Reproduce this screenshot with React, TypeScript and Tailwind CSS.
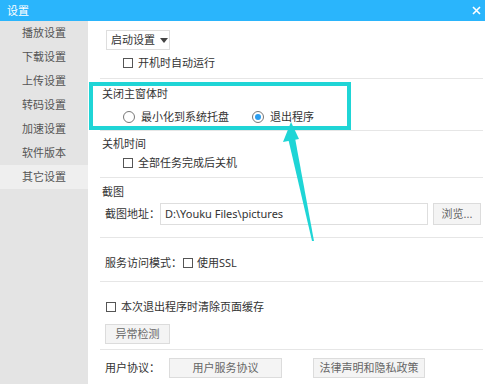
import React from "react";

const font = "font-['Noto_Sans','Noto_Sans_CJK_SC',sans-serif]";

const menu = ["播放设置", "下载设置", "上传设置", "转码设置", "加速设置", "软件版本", "其它设置"];

const Checkbox: React.FC = () => (
  <span className="inline-block w-[10px] h-[10px] border border-[#555] bg-white shrink-0" />
);

const Radio: React.FC<{ checked?: boolean }> = ({ checked }) => (
  <span className="inline-flex items-center justify-center w-[12px] h-[12px] rounded-full border border-[#777] bg-white shrink-0">
    {checked && <span className="w-[6px] h-[6px] rounded-full bg-[#2b9ef0]" />}
  </span>
);

const Divider: React.FC = () => <div className="h-px bg-[#e6e6e6]" />;

const GrayButton: React.FC<{ className: string; children: React.ReactNode }> = ({ className, children }) => (
  <button
    className={`flex items-center justify-center whitespace-nowrap shrink-0 border border-[#dcdcdc] bg-[#f4f4f4] text-[#666] text-[11px] ${className}`}
  >
    {children}
  </button>
);

export default function App() {
  return (
    <div
      className={`relative w-[485px] h-[384px] overflow-hidden whitespace-nowrap bg-white text-[11px] leading-[16px] text-[#333] ${font}`}
    >
      {/* title bar */}
      <div className="h-[21px] bg-[#2ab5fc] flex items-center justify-between pl-[7px] pr-[4px] text-white">
        <span>设置</span>
        <svg width="9" height="9" viewBox="0 0 9 9">
          <path d="M1 1 L8 8 M8 1 L1 8" stroke="white" strokeWidth="1.6" />
        </svg>
      </div>

      <div className="flex h-[363px]">
        {/* sidebar */}
        <div className="w-[88px] shrink-0 bg-[#e4e4e4] text-[#555]">
          {menu.map((m, i) => (
            <div
              key={m}
              className={`h-[24px] flex items-center justify-center ${i === menu.length - 1 ? "bg-[#efefef]" : ""}`}
            >
              {m}
            </div>
          ))}
        </div>

        {/* content */}
        <div className="flex-1 pl-[12px] pr-[2px]">
          {/* startup */}
          <div className="pt-[9px]">
            <div className="ml-[6px] w-[64px] h-[20px] border border-[#dedede] flex items-center pl-[4px] gap-[5px]">
              <span>启动设置</span>
              <span className="w-0 h-0 border-l-[4px] border-r-[4px] border-t-[5px] border-l-transparent border-r-transparent border-t-[#444]" />
            </div>
            <div className="mt-[5px] ml-[23px] h-[16px] flex items-center gap-[5px]">
              <Checkbox />
              <span>开机时自动运行</span>
            </div>
          </div>
          <div className="mt-[7px]">
            <Divider />
          </div>

          {/* close window */}
          <div className="mt-[7px] h-[16px] ml-[2px]">关闭主窗体时</div>
          <div className="mt-[7px] h-[16px] flex items-center ml-[23px]">
            <Radio />
            <span className="ml-[6px] w-[111px]">最小化到系统托盘</span>
            <Radio checked />
            <span className="ml-[6px]">退出程序</span>
          </div>
          <div className="mt-[5px]">
            <Divider />
          </div>

          {/* shutdown */}
          <div className="mt-[5px] h-[16px] ml-[2px]">关机时间</div>
          <div className="mt-[3px] ml-[23px] h-[16px] flex items-center gap-[5px]">
            <Checkbox />
            <span>全部任务完成后关机</span>
          </div>
          <div className="mt-[6px]">
            <Divider />
          </div>

          {/* screenshot */}
          <div className="mt-[6px] h-[16px] ml-[2px]">截图</div>
          <div className="mt-[3px] h-[22px] flex items-center">
            <span className="ml-[5px] w-[55px] shrink-0">截图地址：</span>
            <div className="w-[268px] h-[22px] shrink-0 border border-[#dedede] flex items-center pl-[4px]">
              D:\Youku Files\pictures
            </div>
            <GrayButton className="ml-[5px] w-[48px] h-[22px]">浏览...</GrayButton>
          </div>
          <div className="mt-[12px]">
            <Divider />
          </div>

          {/* ssl */}
          <div className="mt-[17px] h-[16px] flex items-center">
            <span className="ml-[5px] w-[78px] shrink-0">服务访问模式：</span>
            <Checkbox />
            <span className="ml-[4px]">使用SSL</span>
          </div>
          <div className="mt-[10px]">
            <Divider />
          </div>

          {/* cache */}
          <div className="mt-[17px] h-[16px] flex items-center ml-[6px] gap-[5px]">
            <Checkbox />
            <span>本次退出程序时清除页面缓存</span>
          </div>
          <GrayButton className="mt-[9px] ml-[5px] w-[65px] h-[20px]">异常检测</GrayButton>
          <div className="mt-[5px]">
            <Divider />
          </div>

          {/* agreements */}
          <div className="mt-[8px] h-[20px] flex items-center">
            <span className="ml-[5px] w-[64px] shrink-0">用户协议：</span>
            <GrayButton className="w-[113px] h-[20px]">用户服务协议</GrayButton>
            <GrayButton className="ml-[31px] w-[112px] h-[20px]">法律声明和隐私政策</GrayButton>
          </div>
        </div>
      </div>

      {/* annotation highlight */}
      <div className="absolute left-[89px] top-[82px] w-[262px] h-[48px] border-[4px] border-[#1fd5d6]" />
      <svg className="absolute left-0 top-0 pointer-events-none" width="485" height="384" viewBox="0 0 485 384">
        <polygon points="288,138 295,138 314,241 312,241" fill="#1fd5d6" />
        <polygon points="291,122 283,142 299,139" fill="#1fd5d6" />
      </svg>
    </div>
  );
}
